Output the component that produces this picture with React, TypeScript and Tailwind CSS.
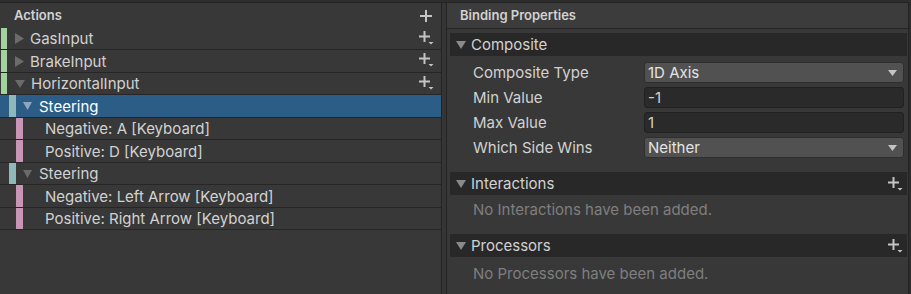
import React from "react";

type Kind = "action" | "composite" | "binding";

type TreeRow = {
  label: string;
  h: number;
  kind: Kind;
  open?: boolean;
  selected?: boolean;
};

const rows: TreeRow[] = [
  { label: "GasInput", h: 22, kind: "action" },
  { label: "BrakeInput", h: 23, kind: "action" },
  { label: "HorizontalInput", h: 22, kind: "action", open: true },
  { label: "Steering", h: 23, kind: "composite", selected: true },
  { label: "Negative: A [Keyboard]", h: 22, kind: "binding" },
  { label: "Positive: D [Keyboard]", h: 23, kind: "binding" },
  { label: "Steering", h: 22, kind: "composite" },
  { label: "Negative: Left Arrow [Keyboard]", h: 23, kind: "binding" },
  { label: "Positive: Right Arrow [Keyboard]", h: 22, kind: "binding" },
];

const TriRight = ({ color = "#6b6b6b" }: { color?: string }) => (
  <svg width="9" height="11" viewBox="0 0 9 11" className="shrink-0">
    <polygon points="0,0 9,5.5 0,11" fill={color} />
  </svg>
);

const TriDown = ({ color = "#6b6b6b", w = 10, h = 8 }: { color?: string; w?: number; h?: number }) => (
  <svg width={w} height={h} viewBox={`0 0 ${w} ${h}`} className="shrink-0">
    <polygon points={`0,0 ${w},0 ${w / 2},${h}`} fill={color} />
  </svg>
);

const Plus = () => (
  <svg width="12" height="12" viewBox="0 0 12 12" className="shrink-0">
    <path d="M0 6H12M6 0V12" stroke="#c4c4c4" strokeWidth="2" />
  </svg>
);

// plus with the little dropdown caret under its right side
const PlusMenu = () => (
  <svg width="15" height="14" viewBox="0 0 15 14" className="shrink-0">
    <path d="M0 5.5H11M5.5 0V11" stroke="#c4c4c4" strokeWidth="2" />
    <polygon points="9.5,11 14.5,11 12,13.5" fill="#c4c4c4" />
  </svg>
);

const Row = ({ row }: { row: TreeRow }) => {
  const bg = row.selected ? "bg-[#2c5d87]" : "bg-[#383838]";
  return (
    <div
      className={`flex items-stretch border-b border-[#262626] ${bg}`}
      style={{ height: row.h }}
    >
      {row.kind === "action" && (
        <>
          <div className="ml-[1px] w-[6px] bg-[#a3d39c]" />
          <div className="ml-[8px] flex items-center">
            {row.open ? <TriDown /> : <TriRight />}
          </div>
          <span className="ml-[6px] flex items-center text-[#d2d2d2]">{row.label}</span>
          <div className="ml-auto mr-[7px] flex items-center pb-[2px]">
            <PlusMenu />
          </div>
        </>
      )}
      {row.kind === "composite" && (
        <>
          <div className="ml-[9px] w-[7px] bg-[#8fb8bb]" />
          <div className="ml-[7px] flex items-center">
            <TriDown color={row.selected ? "#8ea7bf" : "#6b6b6b"} w={9} h={8} />
          </div>
          <span className={`ml-[7px] flex items-center ${row.selected ? "text-white" : "text-[#d2d2d2]"}`}>
            {row.label}
          </span>
        </>
      )}
      {row.kind === "binding" && (
        <>
          <div className="ml-[16px] w-[7px] bg-[#c896b4]" />
          <span className="ml-[22px] flex items-center text-[#d2d2d2]">{row.label}</span>
        </>
      )}
    </div>
  );
};

const SectionBar = ({ title, add }: { title: string; add?: boolean }) => (
  <div className="ml-[3px] mr-[1px] flex h-[23px] items-center bg-[#282828]">
    <div className="ml-[6px] flex items-center">
      <TriDown color="#8a8a8a" w={10} h={8} />
    </div>
    <span className="ml-[5px] text-[#d2d2d2]">{title}</span>
    {add && (
      <div className="ml-auto mr-[4px] flex items-center pt-[1px]">
        <PlusMenu />
      </div>
    )}
  </div>
);

const Dropdown = ({ value }: { value: string }) => (
  <div className="flex h-[21px] w-[260px] items-center rounded-[3px] border border-[#2f2f2f] bg-[#515151] pl-[3px] pr-[6px]">
    <span className="text-[#e4e4e4]">{value}</span>
    <svg width="9" height="6" viewBox="0 0 9 6" className="ml-auto">
      <polygon points="0,0 9,0 4.5,6" fill="#c4c4c4" />
    </svg>
  </div>
);

const Field = ({ value }: { value: string }) => (
  <div className="flex h-[21px] w-[260px] items-center rounded-[3px] border border-[#212121] bg-[#2a2a2a] pl-[3px]">
    <span className="text-[#d2d2d2]">{value}</span>
  </div>
);

const PropRow = ({ label, children }: { label: string; children: React.ReactNode }) => (
  <div className="flex h-[25px] items-center">
    <span className="ml-[26px] w-[171px] text-[#d2d2d2]">{label}</span>
    {children}
  </div>
);

export default function App() {
  return (
    <div className="flex h-[294px] w-[911px] items-start overflow-hidden bg-[#2d2d2d] pt-[2px] font-['Inter','Noto_Sans',sans-serif] text-[15px] leading-none">
      {/* actions tree */}
      <div className="flex h-[292px] w-[442px] flex-col border-r border-t border-[#232323] bg-[#383838]">
        <div className="flex h-[25px] items-center">
          <span className="ml-[14px] text-[13px] font-semibold text-[#d2d2d2]">Actions</span>
          <div className="ml-auto mr-[9px]">
            <Plus />
          </div>
        </div>
        {rows.map((r, i) => (
          <React.Fragment key={i}>
            <Row row={r} />
          </React.Fragment>
        ))}
      </div>

      {/* splitter */}
      <div className="h-[292px] w-[4px] border-t border-[#232323] bg-[#353535]" />

      {/* binding properties */}
      <div className="flex h-[292px] w-[463px] flex-col border-x border-t border-[#232323] bg-[#383838]">
        <div className="flex h-[26px] items-center border-b border-[#262626] bg-[#3c3c3c]">
          <span className="ml-[13px] text-[13px] font-semibold text-[#d2d2d2]">Binding Properties</span>
        </div>
        <div className="flex flex-col pt-[4px]">
          <SectionBar title="Composite" />
          <div className="flex flex-col pt-[4px]">
            <PropRow label="Composite Type">
              <Dropdown value="1D Axis" />
            </PropRow>
            <PropRow label="Min Value">
              <Field value="-1" />
            </PropRow>
            <PropRow label="Max Value">
              <Field value="1" />
            </PropRow>
            <PropRow label="Which Side Wins">
              <Dropdown value="Neither" />
            </PropRow>
          </div>
          <div className="mt-[12px]">
            <SectionBar title="Interactions" add />
          </div>
          <div className="flex h-[30px] items-center">
            <span className="ml-[26px] pb-[2px] text-[#7f7f7f]">No Interactions have been added.</span>
          </div>
          <div className="mt-[9px]">
            <SectionBar title="Processors" add />
          </div>
          <div className="flex h-[32px] items-center">
            <span className="ml-[26px] text-[#7f7f7f]">No Processors have been added.</span>
          </div>
        </div>
      </div>
    </div>
  );
}
